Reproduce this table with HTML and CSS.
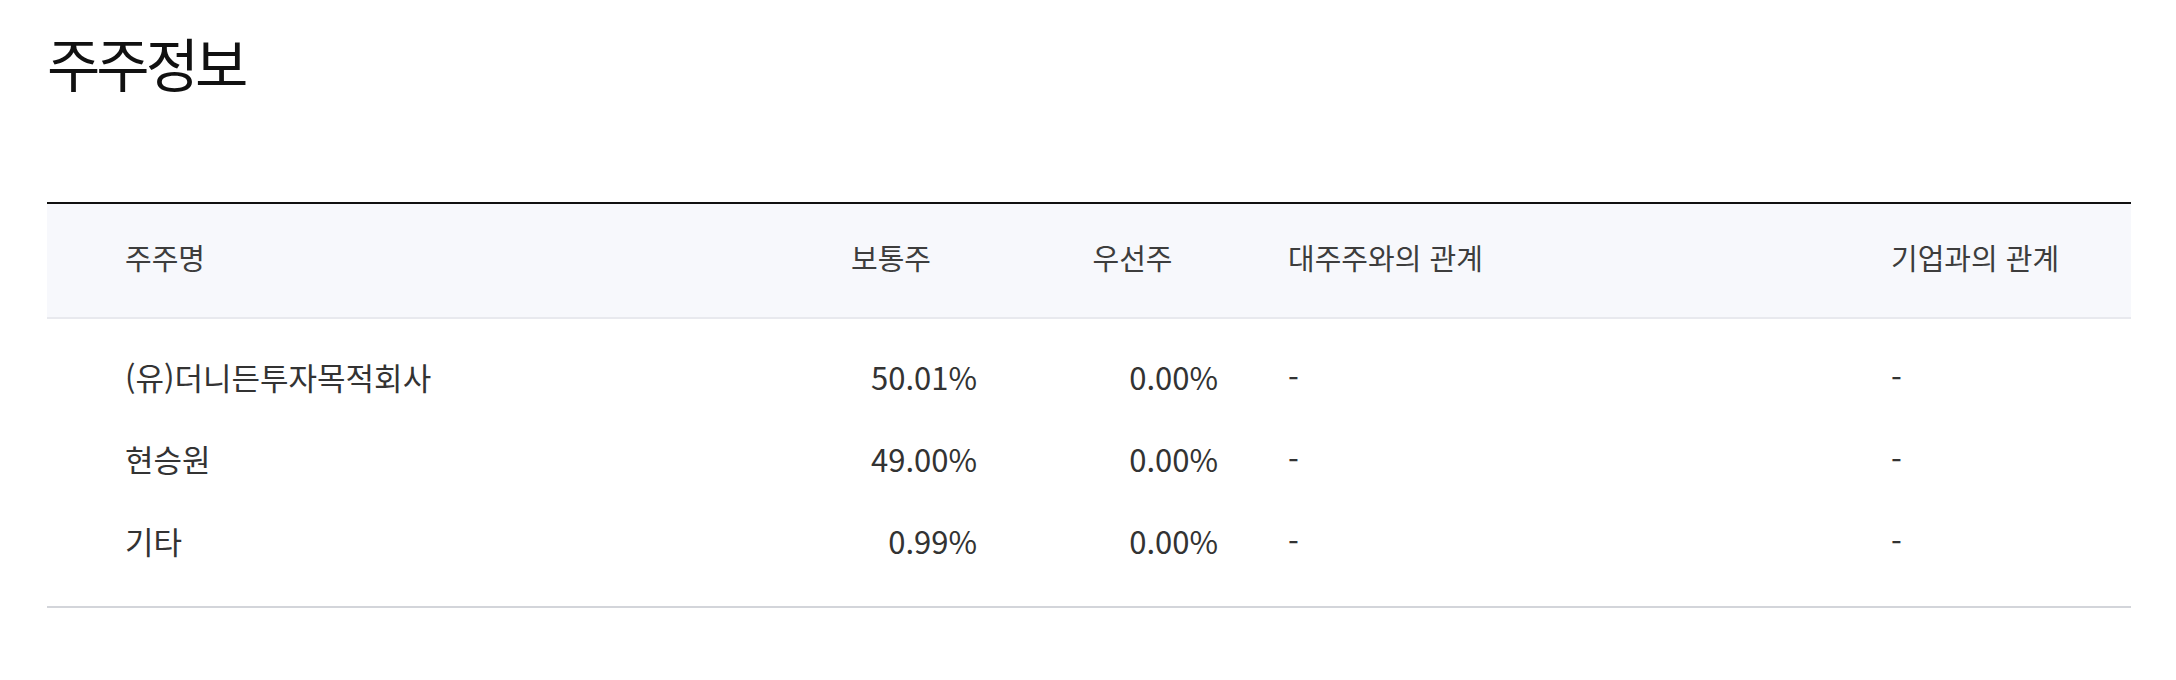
FILE: index.html
```html
<!DOCTYPE html>
<html lang="ko">
<head>
<meta charset="utf-8">
<title>주주정보</title>
<link rel="stylesheet" href="styles.css">
</head>
<body>
<section class="page">
  <h1 class="title">주주정보</h1>
  <table class="holders">
    <colgroup>
      <col class="c-name">
      <col class="c-common">
      <col class="c-pref">
      <col class="c-major">
      <col class="c-corp">
    </colgroup>
    <thead>
      <tr>
        <th class="name">주주명</th>
        <th class="center">보통주</th>
        <th class="center">우선주</th>
        <th class="major">대주주와의 관계</th>
        <th class="corp">기업과의 관계</th>
      </tr>
    </thead>
    <tbody>
      <tr>
        <td class="name">(유)더니든투자목적회사</td>
        <td class="num">50.01%</td>
        <td class="num">0.00%</td>
        <td class="major">-</td>
        <td class="corp">-</td>
      </tr>
      <tr>
        <td class="name">현승원</td>
        <td class="num">49.00%</td>
        <td class="num">0.00%</td>
        <td class="major">-</td>
        <td class="corp">-</td>
      </tr>
      <tr>
        <td class="name">기타</td>
        <td class="num">0.99%</td>
        <td class="num">0.00%</td>
        <td class="major">-</td>
        <td class="corp">-</td>
      </tr>
    </tbody>
  </table>
</section>
</body>
</html>
```

FILE: styles.css
```css
html, body {
  margin: 0;
  padding: 0;
  background: #ffffff;
}

body {
  font-family: "Noto Sans CJK KR", "Noto Sans", sans-serif;
  color: #333333;
}

.page {
  padding: 0 45px 0 47px;
}

.title {
  margin: 0;
  padding-top: 22px;
  font-size: 58px;
  line-height: 80px;
  font-weight: 400;
  letter-spacing: -4px;
  color: #111111;
}

.holders {
  width: 100%;
  margin-top: 100px;
  border-collapse: collapse;
  table-layout: fixed;
  font-size: 31px;
}

.c-name { width: 723px; }
.c-common { width: 242px; }
.c-pref { width: 241px; }
.c-major { width: 604px; }
.c-corp { width: 274px; }

.holders thead tr {
  border-top: 2px solid #111111;
  border-bottom: 2px solid #e8e9ee;
  background: #f7f8fc;
}

.holders th {
  height: 105px;
  padding: 0 0 8px 0;
  font-size: 29px;
  font-weight: 400;
  text-align: left;
  color: #3d3d3d;
}

.holders td {
  height: 82px;
  padding: 0;
  text-align: left;
}

.holders .name { padding-left: 78px; }
.holders .center { text-align: center; }
.holders .num { text-align: right; padding-right: 35px; }
.holders .major { padding-left: 35px; }
.holders .corp { padding-left: 34px; }

.holders tbody tr:first-child td { padding-top: 16px; }
.holders tbody tr:last-child td { padding-bottom: 25px; }

.holders tbody {
  border-bottom: 2px solid #d3d5da;
}
```
